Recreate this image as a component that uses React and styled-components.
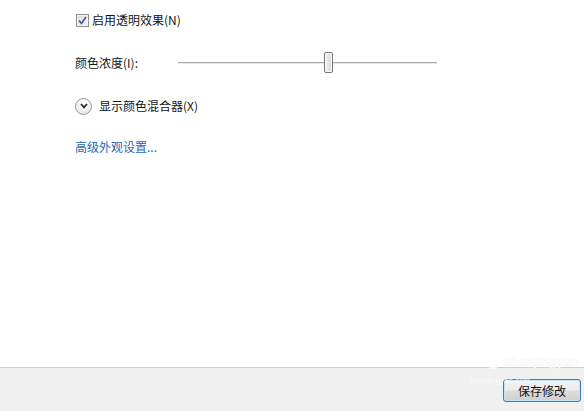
import React from "react";
import styled, { createGlobalStyle } from "styled-components";

const GlobalStyle = createGlobalStyle`
  html, body {
    margin: 0;
    padding: 0;
    background: #ffffff;
  }
  body {
    font-family: "Noto Sans CJK SC", "Liberation Sans", sans-serif;
    font-size: 12px;
    color: #151515;
  }
`;

const Window = styled.div`
  position: relative;
  width: 584px;
  height: 411px;
  display: flex;
  flex-direction: column;
  overflow: hidden;
`;

// 설정 영역
const Content = styled.div`
  flex: 1;
  display: flex;
  flex-direction: column;
  padding: 10px 0 0 75px;
  background: #ffffff;
  border-bottom: 1px solid #cfcfcf;
`;

const Row = styled.div`
  display: flex;
  align-items: center;
  height: 20px;
  margin-top: ${(p) => p.$gap || 0}px;
`;

const Label = styled.span`
  font-size: 12px;
  line-height: 20px;
  white-space: nowrap;
  width: ${(p) => (p.$width ? `${p.$width}px` : "auto")};
  margin-left: ${(p) => p.$indent || 0}px;
`;

const CheckBox = styled.span`
  width: 11px;
  height: 11px;
  margin-left: 1px;
  border: 1px solid #8e8f8f;
  background: linear-gradient(135deg, #dcdcdc 0%, #f6f6f6 100%);
  box-shadow: inset 0 0 0 1px #f4f4f4;
  display: flex;
  align-items: center;
  justify-content: center;
`;

const SliderTrack = styled.div`
  position: relative;
  width: 259px;
  height: 20px;
  display: flex;
  align-items: center;

  &::before {
    content: "";
    flex: 1;
    height: 1px;
    background: #a9a9a9;
    border-bottom: 1px solid #e8e8e8;
  }
`;

const Thumb = styled.div`
  position: absolute;
  top: -1px;
  width: 7px;
  height: 19px;
  border: 1px solid #777777;
  border-radius: 2px;
  background: linear-gradient(to right, #f8f8f8 0%, #e6e6e6 50%, #d8d8d8 100%);
  box-shadow: inset 0 0 0 1px #fbfbfb;
`;

const Expander = styled.span`
  width: 15px;
  height: 15px;
  border-radius: 50%;
  border: 1px solid #9b9b9b;
  background: radial-gradient(circle at 50% 30%, #ffffff 0%, #ececec 70%, #d6d6d6 100%);
  display: flex;
  align-items: center;
  justify-content: center;
`;

const Link = styled.a`
  font-size: 12px;
  line-height: 20px;
  color: #2467b3;
  text-decoration: none;
  cursor: pointer;
`;

// 하단 버튼 영역
const Footer = styled.div`
  height: 43px;
  background: #f0f0f0;
  display: flex;
  justify-content: flex-end;
  align-items: flex-start;
  padding: 11px 3px 0 0;
  box-sizing: border-box;
`;

const Button = styled.button`
  width: 78px;
  height: 23px;
  padding: 0;
  border: 1px solid #3c7fb1;
  border-radius: 3px;
  background: linear-gradient(to bottom, #f2f2f2 0%, #ebebeb 48%, #dddddd 52%, #cfcfcf 100%);
  box-shadow: inset 0 0 0 1px #bfe4f7;
  font-family: "Noto Sans CJK SC", "Liberation Sans", sans-serif;
  font-size: 12px;
  color: #111111;
  line-height: 20px;
`;

const Watermark = styled.div`
  position: absolute;
  left: 486px;
  top: 354px;
  display: flex;
  align-items: center;
  gap: 3px;
  font-family: "Liberation Sans", sans-serif;
  font-weight: bold;
  font-size: 13px;
  color: rgba(255, 255, 255, 0.75);
  text-shadow: 0 0 1px rgba(200, 200, 200, 0.35);
  pointer-events: none;
`;

const WatermarkSub = styled.div`
  position: absolute;
  left: 470px;
  top: 376px;
  font-family: "Liberation Sans", sans-serif;
  font-size: 8px;
  color: rgba(255, 255, 255, 0.8);
  pointer-events: none;
`;

const App = () => {
  const value = 0.58;

  return (
    <>
      <GlobalStyle />
      <Window>
        <Content>
          <Row>
            <CheckBox>
              <svg width="9" height="9" viewBox="0 0 9 9">
                <path
                  d="M1 4.5 L3.5 7.5 L8 1"
                  fill="none"
                  stroke="#3d5a9e"
                  strokeWidth="1.6"
                />
              </svg>
            </CheckBox>
            <Label $indent={3}>启用透明效果(N)</Label>
          </Row>

          <Row $gap={23}>
            <Label $width={103}>颜色浓度(I):</Label>
            <SliderTrack>
              <Thumb style={{ left: `${Math.round(value * 259) - 4}px` }} />
            </SliderTrack>
          </Row>

          <Row $gap={23}>
            <Expander>
              <svg width="8" height="6" viewBox="0 0 8 6">
                <path
                  d="M1 1 L4 4.3 L7 1"
                  fill="none"
                  stroke="#2b2b2b"
                  strokeWidth="1.8"
                />
              </svg>
            </Expander>
            <Label $indent={7}>显示颜色混合器(X)</Label>
          </Row>

          <Row $gap={21}>
            <Link>高级外观设置...</Link>
          </Row>
        </Content>

        <Footer>
          <Button>保存修改</Button>
        </Footer>

        <Watermark>
          <svg width="14" height="14" viewBox="0 0 14 14">
            <circle cx="7" cy="7" r="6" fill="none" stroke="rgba(255,255,255,0.8)" strokeWidth="2" />
          </svg>
          <span>shenjingyan</span>
        </Watermark>
        <WatermarkSub>shenjingyan.com</WatermarkSub>
      </Window>
    </>
  );
};

export default App;
